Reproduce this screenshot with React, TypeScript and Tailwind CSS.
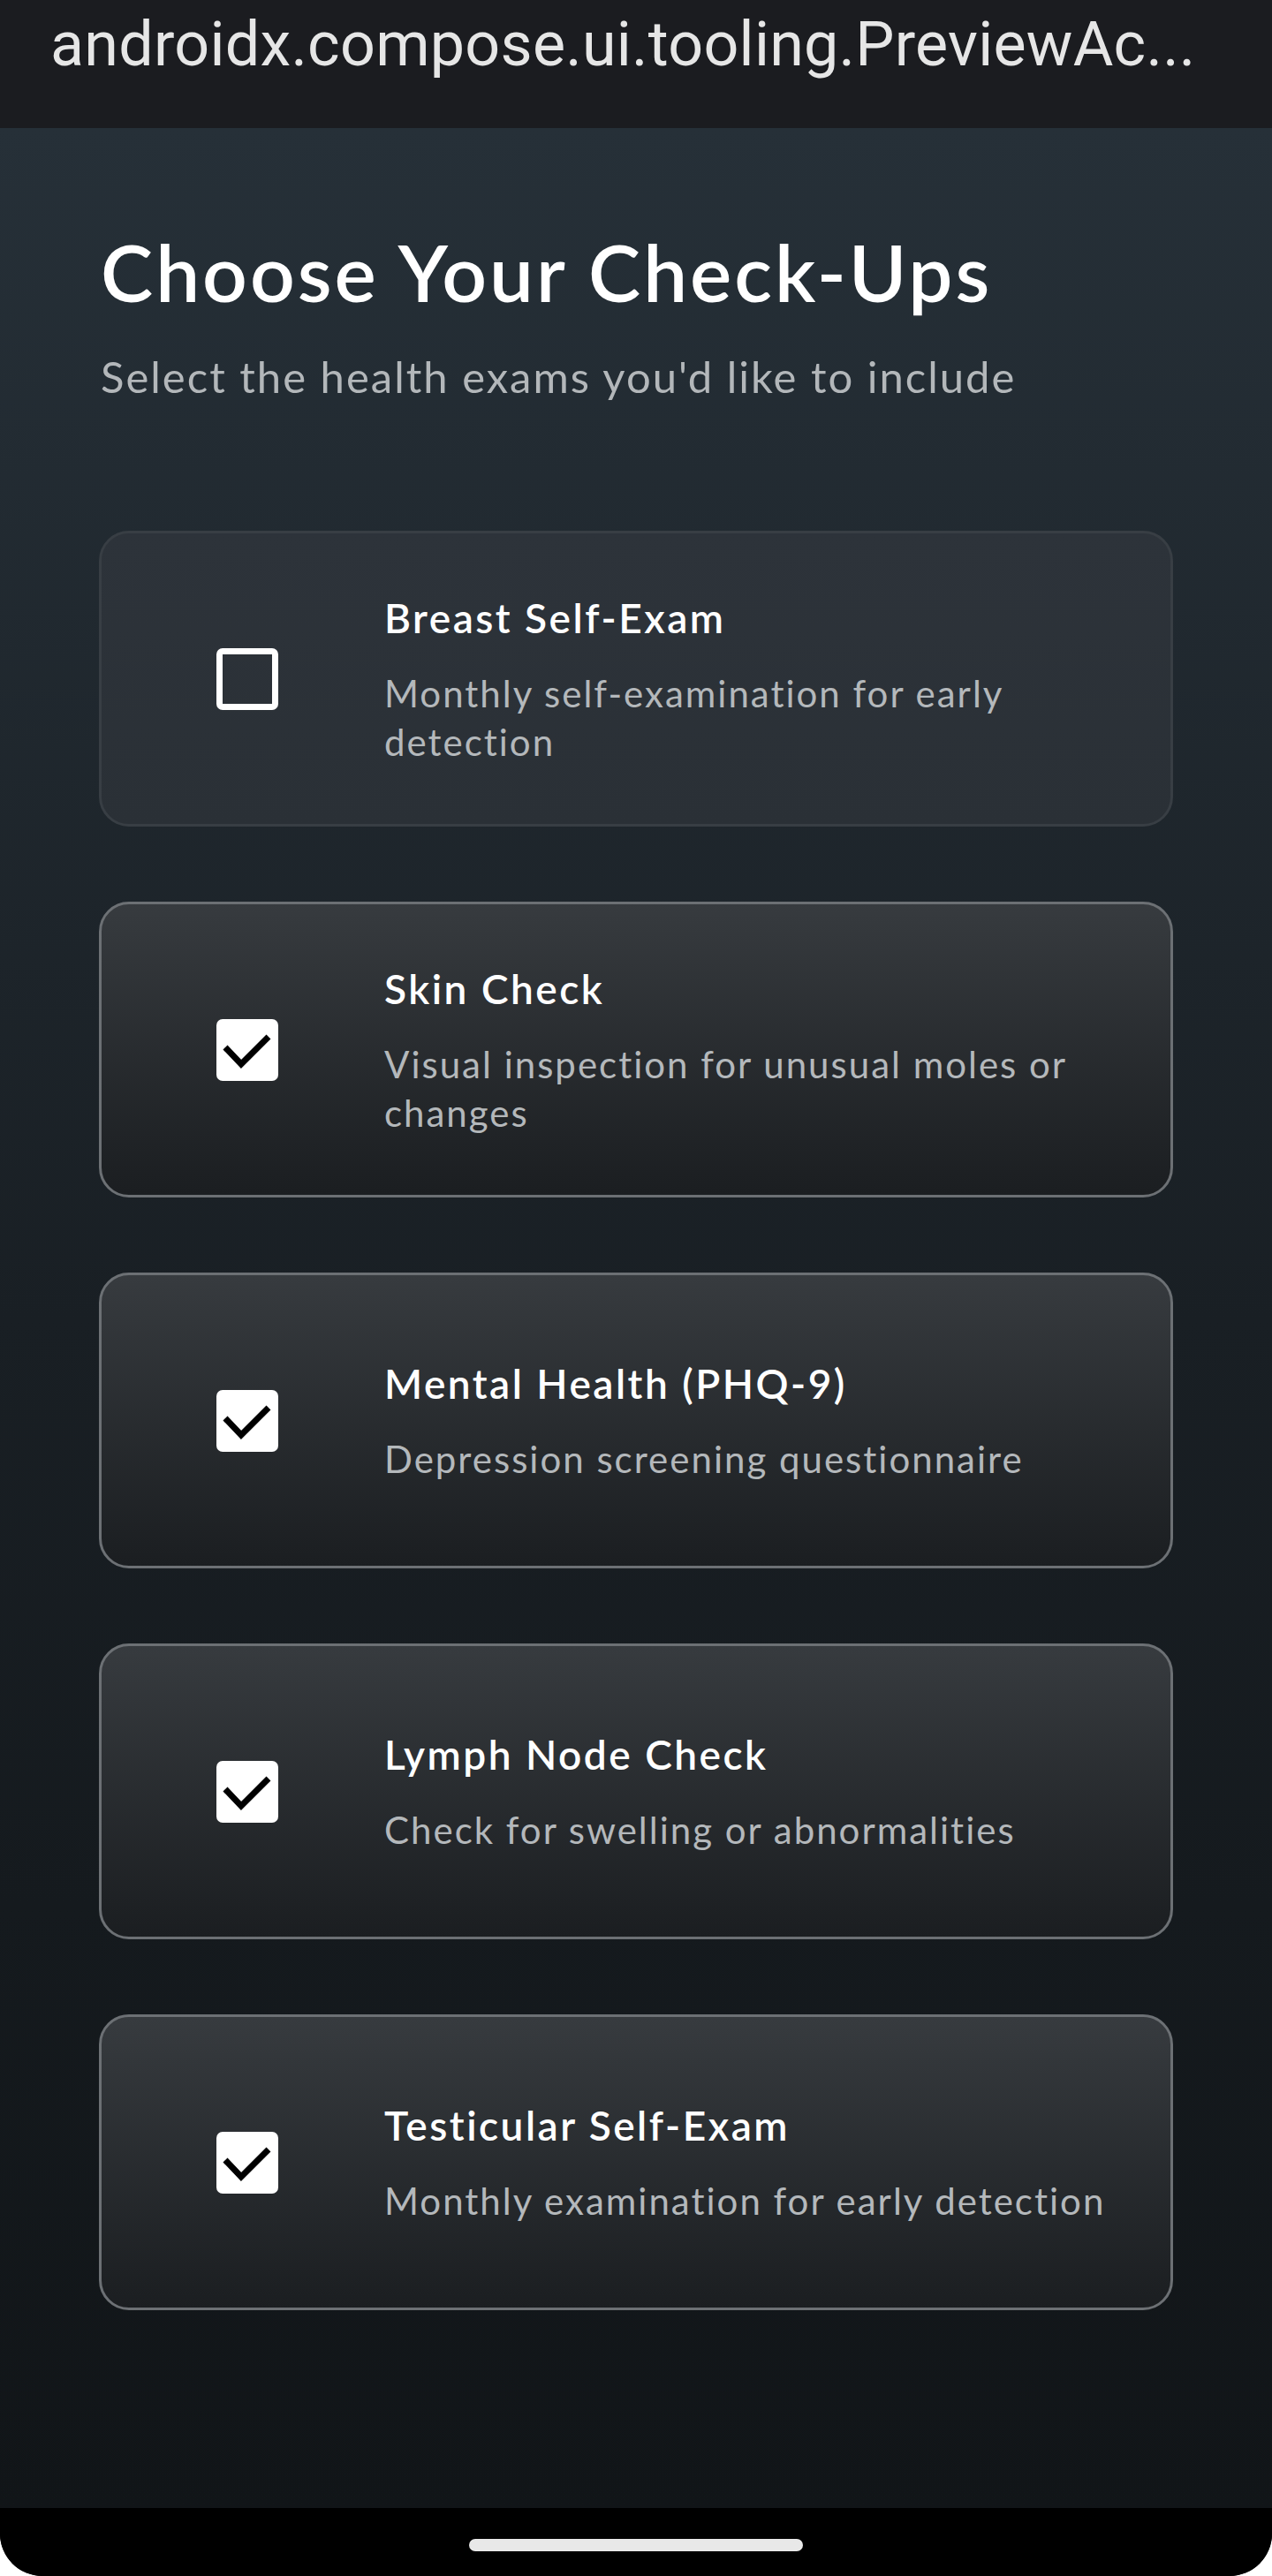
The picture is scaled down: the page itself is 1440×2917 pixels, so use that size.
import React from "react";

type Item = { title: string; desc: string; checked: boolean };

const items: Item[] = [
  { title: "Breast Self-Exam", desc: "Monthly self-examination for early detection", checked: false },
  { title: "Skin Check", desc: "Visual inspection for unusual moles or changes", checked: true },
  { title: "Mental Health (PHQ-9)", desc: "Depression screening questionnaire", checked: true },
  { title: "Lymph Node Check", desc: "Check for swelling or abnormalities", checked: true },
  { title: "Testicular Self-Exam", desc: "Monthly examination for early detection", checked: true },
];

function Checkbox({ checked }: { checked: boolean }) {
  if (!checked) {
    return <div className="w-[70px] h-[70px] shrink-0 rounded-[7px] border-[7px] border-white" />;
  }
  return (
    <div className="w-[70px] h-[70px] shrink-0 rounded-[7px] bg-white flex items-center justify-center">
      <svg width="70" height="70" viewBox="0 0 70 70">
        <path d="M10 32 L28 51 L59 20" fill="none" stroke="#000" strokeWidth="7" strokeLinejoin="miter" />
      </svg>
    </div>
  );
}

function Card({ item }: { item: Item }) {
  const cls = item.checked
    ? "border-[#6c7074] bg-gradient-to-b from-[#373b3f] to-[#1b1e21]"
    : "border-[#383e44] bg-gradient-to-b from-[#2d333a] to-[#2a3036]";
  return (
    <div className={`h-[335px] rounded-[34px] border-[3px] flex items-center pl-[130px] ${cls}`}>
      <Checkbox checked={item.checked} />
      <div className="ml-[120px] w-[845px] flex flex-col font-['Lato',sans-serif]">
        <div className="text-[46px] leading-[60px] font-semibold text-white tracking-[2.5px]">{item.title}</div>
        <div className="mt-[28px] text-[42px] leading-[55px] text-[#b4b8bb] tracking-[2px]">{item.desc}</div>
      </div>
    </div>
  );
}

export default function App() {
  return (
    <div className="w-[1440px] h-[2917px] bg-white">
      <div className="w-full h-full flex flex-col overflow-hidden rounded-b-[48px] bg-black">
        <div className="h-[145px] shrink-0 bg-[#1b1c20] pl-[57px] pt-[15px]">
          <div className="font-['Roboto',sans-serif] text-[70px] leading-none tracking-[0.25px] text-[#e6e6e6] whitespace-nowrap">
            androidx.compose.ui.tooling.PreviewAc...
          </div>
        </div>
        <div className="flex-1 bg-gradient-to-b from-[#263038] via-[#191f24] to-[#111518] px-[112px] pt-[118px]">
          <h1 className="font-['Lato',sans-serif] text-[89px] leading-none font-semibold text-white pl-[2px] tracking-[3px]">
            Choose Your Check-Ups
          </h1>
          <p className="mt-[50px] font-['Lato',sans-serif] text-[49px] leading-none text-[#b3b7ba] pl-[2px] tracking-[2px]">
            Select the health exams you'd like to include
          </p>
          <div className="mt-[150px] flex flex-col gap-[85px]">
            {items.map((it) => (
              <Card key={it.title} item={it} />
            ))}
          </div>
        </div>
        <div className="h-[77px] shrink-0 bg-black flex justify-center pt-[35px]">
          <div className="w-[378px] h-[14px] rounded-full bg-[#e8e8e8]" />
        </div>
      </div>
    </div>
  );
}
